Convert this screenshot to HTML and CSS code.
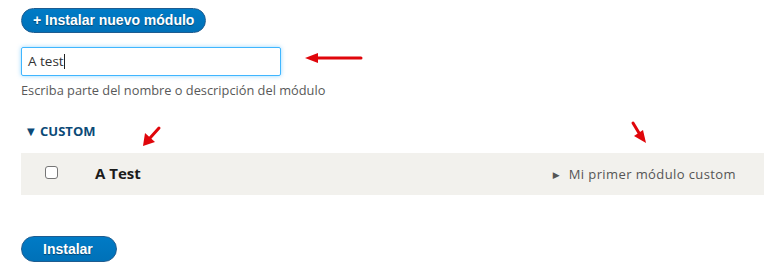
FILE: index.html
```html
<!DOCTYPE html>
<html lang="es">
<head>
  <meta charset="UTF-8">
  <title>Extender - Módulos</title>
  <link rel="stylesheet" href="styles.css">
</head>
<body>
  <div class="page">
    <a class="button button-action" href="#">+ Instalar nuevo módulo</a>

    <div class="form-item">
      <div class="form-text is-focus">A test<span class="caret"></span></div>
      <div class="description">Escriba parte del nombre o descripción del módulo</div>
    </div>

    <div class="package">
      <div class="summary"><span class="toggle">&#9660;</span> CUSTOM</div>
      <div class="module-row">
        <div class="cell-check"><span class="checkbox"></span></div>
        <div class="cell-name">A Test</div>
        <div class="cell-desc"><span class="toggle-small">&#9654;</span> Mi primer módulo custom</div>
      </div>
    </div>

    <a class="button button-primary" href="#">Instalar</a>

    <svg class="notes" width="764" height="280" viewBox="0 0 764 280">
      <g stroke="#e0060b" stroke-width="3" stroke-linecap="round" fill="#e0060b">
        <line x1="361" y1="58" x2="316" y2="58"/>
        <polygon points="305,58 318,53 318,63" stroke="none"/>
        <line x1="159" y1="128" x2="150" y2="138"/>
        <polygon points="143,146 145,133 155,142" stroke="none"/>
        <line x1="633" y1="123" x2="639" y2="133"/>
        <polygon points="646,143 634,136 643,130" stroke="none"/>
      </g>
    </svg>
  </div>
</body>
</html>
```

FILE: styles.css
```css
body {
  margin: 0;
  padding: 0;
  background: #fff;
  font-family: "Open Sans", "DejaVu Sans", sans-serif;
  color: #222;
}
.page {
  position: relative;
  padding: 8px 0 0 21px;
  height: 272px;
  overflow: hidden;
}
.button {
  display: inline-block;
  box-sizing: border-box;
  height: 25px;
  line-height: 23px;
  border-radius: 13px;
  border: 1px solid #1e5c90;
  background: linear-gradient(#007bc6, #0071b8);
  color: #fff;
  font-family: "Liberation Sans", Arial, sans-serif;
  font-weight: bold;
  font-size: 14px;
  text-decoration: none;
  text-shadow: 0 1px 1px rgba(0,0,0,0.4);
}
.button-action {
  width: 185px;
  padding-left: 11px;
}
.button-primary {
  width: 96px;
  height: 26px;
  line-height: 24px;
  padding-left: 21px;
  margin-top: 41px;
}
.form-item {
  margin-top: 14px;
}
.form-text {
  box-sizing: border-box;
  width: 260px;
  height: 29px;
  border: 1px solid #40b6ff;
  border-radius: 2px;
  box-shadow: 0 0 4px rgba(64,182,255,0.55);
  padding: 0 6px;
  line-height: 27px;
  font-size: 13.5px;
  color: #333;
}
.caret {
  display: inline-block;
  width: 1px;
  height: 15px;
  background: #222;
  vertical-align: -3px;
}
.description {
  margin-top: 5px;
  font-size: 12.8px;
  color: #595959;
}
.package {
  margin-top: 23px;
}
.summary {
  padding-left: 6px;
  font-size: 13px;
  font-weight: bold;
  color: #0b4a77;
  height: 20px;
}
.toggle {
  font-size: 10px;
  vertical-align: 1px;
  margin-right: 2px;
}
.module-row {
  display: flex;
  align-items: center;
  height: 42px;
  margin-top: 11px;
  background: #f2f1ed;
}
.cell-check {
  width: 74px;
  padding-left: 24px;
  box-sizing: border-box;
}
.checkbox {
  display: block;
  box-sizing: border-box;
  width: 13px;
  height: 13px;
  border: 1px solid #767676;
  border-radius: 3px;
  background: #fff;
  margin-top: -4px;
}
.cell-name {
  font-size: 15px;
  font-weight: bold;
  color: #1b1b1b;
  margin-top: -2px;
}
.cell-desc {
  margin-left: auto;
  padding-right: 28px;
  font-size: 13px;
  letter-spacing: 0.4px;
  color: #555;
}
.toggle-small {
  font-size: 9px;
  vertical-align: 1px;
  margin-right: 5px;
}
.notes {
  position: absolute;
  top: 0;
  left: 0;
  pointer-events: none;
}
```
